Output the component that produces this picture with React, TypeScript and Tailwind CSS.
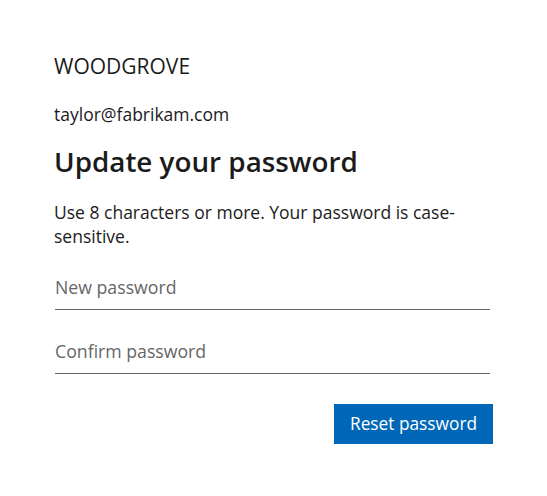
import React from "react";

export default function App() {
  return (
    <div className="min-h-screen w-full bg-white text-[#1b1b1b] [font-family:'Open_Sans',sans-serif]">
      <div className="flex flex-col px-[54px] pt-[54px]">
        <div className="text-[21px] leading-[24px]">WOODGROVE</div>
        <div className="mt-[24px] text-[17.5px] leading-[24px]">taylor@fabrikam.com</div>
        <h1 className="mt-[18px] text-[27.8px] font-semibold leading-[34px]">Update your password</h1>
        <p className="mt-[23px] text-[17.5px] leading-[23.5px]">
          Use 8 characters or more. Your password is case-sensitive.
        </p>
        <div className="mt-[19px] flex flex-col pl-px pr-[3px]">
          <input
            type="password"
            placeholder="New password"
            className="h-[43px] w-full border-b border-[#666666] bg-transparent pb-[3px] text-[17.7px] outline-none placeholder:text-[#666666]"
          />
          <input
            type="password"
            placeholder="Confirm password"
            className="mt-[21px] h-[43px] w-full border-b border-[#666666] bg-transparent pb-[3px] text-[17.7px] outline-none placeholder:text-[#666666]"
          />
        </div>
        <div className="mt-[30px] flex justify-end">
          <button className="h-[40px] w-[159px] bg-[#0067b8] text-[17.3px] text-white">Reset password</button>
        </div>
      </div>
    </div>
  );
}
